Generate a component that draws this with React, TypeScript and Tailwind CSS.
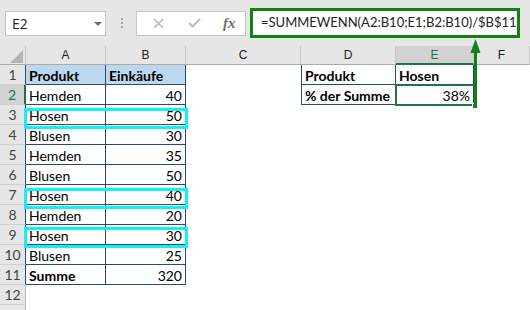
import React from 'react';

const NAVY = 'border-[#1f4e79]';

type Cell = { text: string; bold?: boolean; right?: boolean; fill?: boolean };

const colA = ['Produkt', 'Hemden', 'Hosen', 'Blusen', 'Hemden', 'Blusen', 'Hosen', 'Hemden', 'Hosen', 'Blusen', 'Summe'];
const colB = ['Einkäufe', '40', '50', '30', '35', '50', '40', '20', '30', '25', '320'];

function cellFor(row: number, col: number): Cell | null {
  if (col === 0 && row <= 11) return { text: colA[row - 1], bold: row === 1 || row === 11, fill: row === 1 };
  if (col === 1 && row <= 11) return { text: colB[row - 1], bold: row === 1, right: row !== 1, fill: row === 1 };
  if (col === 3 && row === 1) return { text: 'Produkt', bold: true };
  if (col === 3 && row === 2) return { text: '% der Summe', bold: true };
  if (col === 4 && row === 1) return { text: 'Hosen', bold: true };
  if (col === 4 && row === 2) return { text: '38%', right: true };
  return null;
}

function RowHeader({ row }: { row: number }) {
  const edge =
    row === 2
      ? 'border-r-2 border-r-[#217346] bg-[#d2d2d2] text-[#217346]'
      : row <= 11
        ? 'border-r border-r-[#1f4e79] bg-[#e6e6e6] text-[#444]'
        : 'border-r border-r-[#b5b5b5] bg-[#e6e6e6] text-[#444]';
  return (
    <div className={`flex items-end justify-center border-b border-b-[#d0d0d0] pb-[2px] text-[14px] leading-[14px] ${edge}`}>
      {row <= 12 ? row : ''}
    </div>
  );
}

function DataCell({ row, col }: { row: number; col: number }) {
  const c = cellFor(row, col);
  if (!c) return <div />;
  const left = col === 3 ? `border-l ${NAVY}` : '';
  return (
    <div
      className={`flex items-end overflow-hidden whitespace-nowrap border-r border-b ${NAVY} ${left} px-[3px] pb-[1px] text-[14px] leading-[14px] text-black ${
        c.right ? 'justify-end' : 'justify-start'
      } ${c.bold ? 'font-bold' : ''} ${c.fill ? 'bg-[#bdd7ee]' : ''}`}
    >
      {c.text}
    </div>
  );
}

export default function App() {
  const rows = Array.from({ length: 13 }, (_, i) => i + 1);
  const letters = ['A', 'B', 'C', 'D', 'E', 'F'];

  return (
    <div className="relative h-[310px] w-[530px] overflow-hidden bg-white font-['Lato',sans-serif]">
      {/* toolbar */}
      <div className="flex h-[46px] items-center bg-[#e6e6e6]">
        <div className="relative ml-[5px] flex h-[25px] w-[101px] items-center border border-[#c6c6c6] bg-white pl-[6px] font-['Open_Sans',sans-serif] text-[14px] text-[#222]">
          E2
          <svg className="absolute left-[88px] top-[10px]" width="8" height="4" viewBox="0 0 8 4">
            <polygon points="0,0 8,0 4,4" fill="#6f6f6f" />
          </svg>
        </div>
        <div className="ml-[15px] flex flex-col gap-[2px]">
          <span className="h-[2px] w-[2px] bg-[#a6a6a6]" />
          <span className="h-[2px] w-[2px] bg-[#a6a6a6]" />
          <span className="h-[2px] w-[2px] bg-[#a6a6a6]" />
        </div>
        <div className="ml-[13px] flex h-[25px] w-[110px] items-center border border-[#c6c6c6] bg-white">
          <svg className="ml-[16px]" width="11" height="11" viewBox="0 0 11 11">
            <path d="M1 1 L10 10 M10 1 L1 10" stroke="#bcbcbc" strokeWidth="1.6" />
          </svg>
          <svg className="ml-[24px]" width="13" height="10" viewBox="0 0 13 10">
            <path d="M1 5 L4.5 8.5 L12 1" stroke="#bcbcbc" strokeWidth="2" fill="none" />
          </svg>
          <span className="ml-[22px] font-['Liberation_Serif',serif] text-[15px] italic font-bold text-[#6e6e6e]">fx</span>
        </div>
        <div className="ml-[4px] flex h-[30px] w-[270px] items-center overflow-hidden whitespace-nowrap border-[3px] border-[#128012] bg-white pl-[8px] text-[13px] text-[#222]">
          =SUMMEWENN(A2:B10;E1;B2:B10)/$B$11
        </div>
      </div>

      {/* grid */}
      <div className="grid grid-cols-[26px_80px_80px_115px_95px_78px_1fr] grid-rows-[19px_repeat(13,20px)]">
        <div className="relative border-r border-b border-r-[#c6c6c6] border-b-[#ababab] bg-[#e6e6e6]">
          <svg className="absolute left-[10px] top-[4px]" width="13" height="13" viewBox="0 0 13 13">
            <polygon points="13,0 13,13 0,13" fill="#b4b4b4" />
          </svg>
        </div>
        {letters.map((l) => (
          <div
            key={l}
            className={`flex items-center justify-center border-r border-r-[#c6c6c6] font-['Liberation_Sans',sans-serif] text-[12px] ${
              l === 'E'
                ? 'border-b-2 border-b-[#217346] bg-[#d2d2d2] text-[#217346]'
                : 'border-b border-b-[#ababab] bg-[#e6e6e6] text-[#222]'
            }`}
          >
            {l}
          </div>
        ))}
        {rows.map((r) => (
          <React.Fragment key={r}>
            <RowHeader row={r} />
            {[0, 1, 2, 3, 4, 5].map((c) => (
              <DataCell key={c} row={r} col={c} />
            ))}
          </React.Fragment>
        ))}
      </div>

      {/* cyan highlights */}
      <div className="absolute left-[24px] top-[108px] h-[21px] w-[164px] border-[3px] border-[#12f0f0]" />
      <div className="absolute left-[24px] top-[188px] h-[21px] w-[164px] border-[3px] border-[#12f0f0]" />
      <div className="absolute left-[24px] top-[227px] h-[21px] w-[164px] border-[3px] border-[#12f0f0]" />

      {/* E2 selection */}
      <div className="absolute left-[395px] top-[84px] h-[22px] w-[81px] border-2 border-[#217346]" />
      <div className="absolute left-[472px] top-[103px] h-[6px] w-[6px] border border-white bg-[#217346]" />

      {/* arrow */}
      <svg className="absolute left-[465px] top-[38px]" width="20" height="68" viewBox="0 0 20 68">
        <polygon points="10.5,1 5.5,15 15.5,15" fill="#128012" />
        <rect x="9" y="14" width="3" height="54" fill="#128012" />
      </svg>
    </div>
  );
}
